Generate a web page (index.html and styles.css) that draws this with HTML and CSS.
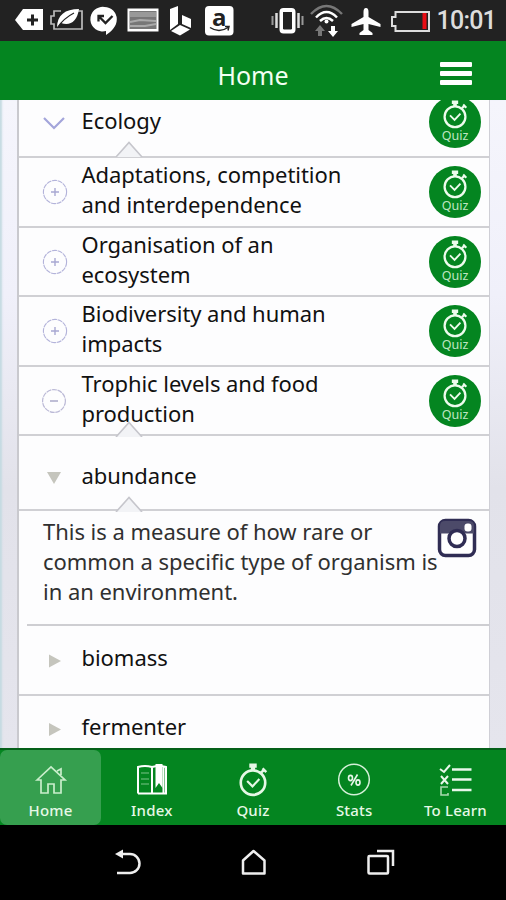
FILE: index.html
```html
<!DOCTYPE html>
<html lang="en">
<head>
<meta charset="utf-8">
<title>Home</title>
<link rel="stylesheet" href="styles.css">
</head>
<body>
<svg class="defs" aria-hidden="true">
  <symbol id="watch" viewBox="0 0 28 32">
    <g fill="none" stroke="currentColor" stroke-width="2.5">
      <circle cx="14" cy="18.500" r="11.500"/>
      <path d="M14 7V3M10.500 2.500h7" stroke-width="4"/>
      <path d="M21.500 9l3-2.500M23 5l3.500 3.500" stroke-width="2.400"/>
      <path d="M8.500 17l5 5 6.500-7" stroke-width="2"/>
    </g>
  </symbol>
  <symbol id="plus" viewBox="0 0 26 26">
    <circle cx="13" cy="13" r="11.600" fill="none" stroke="#b3b3da" stroke-width="1.1" stroke-dasharray="5 .7"/>
    <path d="M9 13h8M13 9v8" stroke="#a8a8d2" stroke-width="1.400"/>
  </symbol>
</svg>
<div class="status">
  <svg width="506" height="41" viewBox="0 0 506 41">
    <path d="M15 20l8-11h20v21H23z" fill="#fff"/>
    <path d="M27 20h11M32.500 14.500v11" stroke="#222" stroke-width="3"/>
    <path d="M61 11h-7v5h-3v8h3v5h28V11h-5" fill="none" stroke="#bbb" stroke-width="1.7"/>
    <path d="M57 28C57 15 65 9 79 9C77 22 70 26 61 23z" fill="#fff"/>
    <path d="M57 28Q64 18 74 13" fill="none" stroke="#222" stroke-width="1.2"/>
    <path d="M104.500 7a12.300 12.300 0 0 1 12.300 12.300c0 7-5 12-10.800 15.700v-4A12.300 12.300 0 1 1 104.500 7z" fill="#fff"/>
    <path d="M98.500 21.500V16h5.500M99 16.500l6.500 6.500 7-7" fill="none" stroke="#222" stroke-width="2.300"/>
    <rect x="127.500" y="8.500" width="31" height="23" fill="#fff"/>
    <rect x="129.500" y="11" width="27" height="18" fill="#777"/>
    <path d="M130 12h26v5h-26z" fill="#999"/>
    <path d="M130 22l10-2 16 1M130 26h15l11-2" stroke="#aaa" stroke-width="2" fill="none"/>
    <path d="M170 9l8-3v18l-8 6zM182 15l9 4v9l-9-4zM171 31l9-6 10 4.500-10 6z" fill="#fff"/>
    <rect x="205" y="6" width="28.500" height="29.500" rx="4" fill="#fff"/>
    <path d="M210 27.500q9 6 18 0M225 26.500h4l-1 4" fill="none" stroke="#222" stroke-width="1.500"/>
    <rect x="281.500" y="10" width="12" height="21.500" rx="2" fill="none" stroke="#fff" stroke-width="4"/>
    <rect x="283" y="12" width="9" height="17" fill="#222"/>
    <path d="M276.500 13v15M298.500 13v15" stroke="#ddd" stroke-width="2.500"/>
    <path d="M272.500 16v9M302.500 16v9" stroke="#999" stroke-width="2"/>
    <g fill="none" stroke-width="2.500">
      <path d="M311 14q15.500-16 31 0" stroke="#777"/>
      <path d="M316 17.500q10.500-11 21 0M320 21q6.500-6 13 0" stroke="#fff"/>
    </g>
    <path d="M315 31l5-6 5 6h-3v5h-4v-5z" fill="#777"/>
    <path d="M328 31l5 6 5-6h-3v-5h-4v5z" fill="#fff"/>
    <circle cx="326.500" cy="21.500" r="2" fill="#fff"/>
    <path d="M366 8c2 0 2.500 2 2.500 4v5l12 7v3l-12-3v6l4 3v2h-13v-2l4-3v-6l-12 3v-3l12-7v-5c0-2 .5-4 2.500-4z" fill="#fff"/>
    <path d="M395.500 12h33.500v19h-33.500v-5h-3.500v-9h3.500z" fill="#222" stroke="#ddd" stroke-width="2"/>
    <rect x="422.500" y="13" width="4" height="16" fill="#e80d14"/>
  </svg>
  <span class="amazon">a</span>
  <span class="clock">10:01</span>
</div>
<header class="top">
  <h1>Home</h1>
  <div class="burger"><i></i><i></i><i></i></div>
</header>
<main class="page">
  <div class="list">
    <div class="row first">
      <svg class="icon" viewBox="0 0 26 26"><path d="M2 9l10 10L22 9" fill="none" stroke="#a3a5da" stroke-width="2.200"/></svg>
      <p>Ecology</p>
      <div class="quiz"><svg><use href="#watch"/></svg><span>Quiz</span></div>
      <svg class="notch" viewBox="0 0 28 16"><path d="M1 16L14 1.500 27 16" fill="#f2f3f6" stroke="#c6c6cc" stroke-width="1.600"/></svg>
    </div>
    <div class="row">
      <svg class="icon"><use href="#plus"/></svg>
      <p>Adaptations, competition<br>and interdependence</p>
      <div class="quiz"><svg><use href="#watch"/></svg><span>Quiz</span></div>
    </div>
    <div class="row">
      <svg class="icon"><use href="#plus"/></svg>
      <p>Organisation of an<br>ecosystem</p>
      <div class="quiz"><svg><use href="#watch"/></svg><span>Quiz</span></div>
    </div>
    <div class="row">
      <svg class="icon"><use href="#plus"/></svg>
      <p>Biodiversity and human<br>impacts</p>
      <div class="quiz"><svg><use href="#watch"/></svg><span>Quiz</span></div>
    </div>
    <div class="row">
      <svg class="icon minus" viewBox="0 0 26 26"><circle cx="13" cy="13" r="11.400" fill="none" stroke="#bbb9d6" stroke-width="1.200" stroke-dasharray="5 .7"/><path d="M9 13h8" stroke="#aaa8c8" stroke-width="1.500"/></svg>
      <p>Trophic levels and food<br>production</p>
      <div class="quiz"><svg><use href="#watch"/></svg><span>Quiz</span></div>
      <svg class="notch low" viewBox="0 0 28 16"><path d="M1 16L14 1.500 27 16" fill="#f2f3f6" stroke="#c6c6cc" stroke-width="1.600"/></svg>
    </div>
    <div class="row term open">
      <svg class="icon" viewBox="0 0 26 26"><path d="M5 8h14l-7 12z" fill="#c5c5bd"/></svg>
      <p>abundance</p>
      <svg class="notch low" viewBox="0 0 28 16"><path d="M1 16L14 1.500 27 16" fill="#f2f3f6" stroke="#c6c6cc" stroke-width="1.600"/></svg>
    </div>
    <div class="detail">
      <p>This is a measure of how rare or<br>common a specific type of organism is<br>in an environment.</p>
      <svg class="insta" viewBox="0 0 40 40">
        <rect x="2.500" y="2.500" width="35" height="35" rx="6" fill="#fff" stroke="#302d54" stroke-width="3.500"/>
        <path d="M3 15.500V8q0-5 5-5h24q5 0 5 5v7.500z" fill="#4c4a69"/>
        <circle cx="20" cy="20.500" r="8" fill="#fff" stroke="#302d54" stroke-width="3.500"/>
        <rect x="27.500" y="5.500" width="7" height="8" rx="3" fill="#fff"/>
      </svg>
    </div>
    <div class="row term">
      <svg class="icon" viewBox="0 0 26 26"><path d="M7 6.500l12 6.500-12 6.500z" fill="#c5c5bd"/></svg>
      <p>biomass</p>
    </div>
    <div class="row term last">
      <svg class="icon" viewBox="0 0 26 26"><path d="M7 7l12 6.500-12 6.500z" fill="#c5c5bd"/></svg>
      <p>fermenter</p>
    </div>
  </div>
</main>
<nav class="tabs">
  <div class="tab on">
    <svg viewBox="0 0 34 34"><path d="M3 17L17 4l14 13h-4v13h-7v-9h-6v9H7V17zM23 8l4-2v6" fill="none" stroke="#c9eecb" stroke-width="1.700"/></svg>
    <span>Home</span>
  </div>
  <div class="tab">
    <svg viewBox="0 0 34 34"><g fill="none" stroke="#fff" stroke-width="2"><path d="M3 30.500V4q7-2 14 0 7-2 14 0v26.500H3M17 4v26M28.500 4v26"/><path d="M6 10h8M6 16h8M6 21h8" stroke="#7ac487" stroke-width="1.200"/></g><path d="M20.500 1h7v24l-3.500-5-3.500 5z" fill="#fff"/></svg>
    <span>Index</span>
  </div>
  <div class="tab">
    <svg><use href="#watch"/></svg>
    <span>Quiz</span>
  </div>
  <div class="tab">
    <svg viewBox="0 0 34 34"><circle cx="17" cy="16.500" r="15.300" fill="none" stroke="#d5f0d8" stroke-width="1.500"/><g fill="none" stroke="#e8f7ea" stroke-width="1.600"><ellipse cx="13.500" cy="15" rx="2" ry="2.600"/><ellipse cx="21" cy="19.500" rx="2" ry="2.600"/><path d="M20.500 11.500l-6.500 11"/></g></svg>
    <span>Stats</span>
  </div>
  <div class="tab">
    <svg viewBox="0 0 34 34"><g fill="none" stroke="#e8f7ea" stroke-width="2.500"><path d="M14 6.500h19.500M14 16.500h19.500M14 27h19.500"/><path d="M2 6l4 3 6-7M3 13l7 8M10 13l-7 8" stroke-width="2"/><path d="M10 24H3v8h7v-2" stroke="#a9d9af" stroke-width="1.600"/></g></svg>
    <span>To Learn</span>
  </div>
</nav>
<div class="system">
  <svg viewBox="0 0 506 75" width="506" height="75">
    <g fill="none" stroke="#eee" stroke-width="2.500">
      <path d="M121 29h9a9.500 9.500 0 0 1 0 19h-13"/>
      <path d="M243 48.500V35.500l10.500-9.500L264.500 35.500v13z" stroke-linejoin="round"/>
      <rect x="368.500" y="31" width="19.500" height="17.500" rx="1"/>
      <path d="M377 26h16v15"/>
    </g>
    <path d="M115 29l8-4.500v9z" fill="#eee"/>
  </svg>
</div>
</body>
</html>
```
FILE: styles.css
```css
* { box-sizing: border-box; }
body {
  margin: 0;
  width: 506px;
  height: 900px;
  overflow: hidden;
  display: flex;
  flex-direction: column;
  font-family: "Noto Sans", "Open Sans", sans-serif;
  color: #111;
}
p, h1 { margin: 0; font-weight: 400; }
svg { display: block; }
.defs { position: absolute; width: 0; height: 0; }

.status { position: relative; height: 41px; flex: none; background: #222; color: #fff; }
.clock {
  position: absolute; right: 10px; top: 5px;
  font: 500 25px/32px Roboto, sans-serif; letter-spacing: -0.8px; color: #ddd;
}
.amazon {
  position: absolute; left: 212px; top: 2px;
  font: bold 24px/30px "Open Sans", sans-serif; color: #222;
}

.top {
  height: 59px; flex: none; background: #048520; color: #f2fff2;
  display: grid; grid-template-columns: 1fr auto 1fr; align-items: center;
}
.top h1 { grid-column: 2; font-size: 25px; line-height: 34px; padding-top: 8px; }
.burger {
  justify-self: end; margin: 6px 34px 0 0; width: 32px;
  display: flex; flex-direction: column; gap: 4px;
}
.burger i { height: 5px; background: #fff; border-radius: 1px; }

.page {
  height: 648px; flex: none; overflow: hidden; padding: 0 16px 0 17px;
  background: linear-gradient(180deg, #f5f5fc, #f0f0fa 30%, #e2e2ea 60%, #e5e5ed);
  box-shadow: inset 3px 0 2px -1px #c5dbe2;
}
.list { background: #fdfdfe; border-left: 2px solid #c9c9ce; border-right: 1px solid #cfcfd6; }
.row {
  position: relative; height: 69.5px; border-bottom: 2px solid #d0d0d4;
  display: flex; align-items: center; padding: 1px 8px 0 23px;
}
.row p {
  flex: 1; margin-left: 13.500px; padding-bottom: 6px;
  font-size: 22px; line-height: 30px; letter-spacing: -0.05px;
}
.row.first { height: 58.2px; padding-bottom: 13px; }
.row.first p { padding-bottom: 5px; }
.icon { width: 26px; height: 26px; flex: none; }
.icon.minus { margin: 0 1px 0 -1px; }
.row.term { height: 70px; }
.row.term p { padding-bottom: 7px; }
.row.open { height: 75px; padding-top: 8px; }
.row.open p { padding-bottom: 4px; }
.row.last { height: 69px; border: 0; padding-bottom: 4px; }
.notch { position: absolute; left: 96px; bottom: -1px; width: 28px; height: 16px; }
.notch.low { bottom: -3px; }
.quiz {
  width: 52px; height: 52px; border-radius: 50%; background: #048520; color: #edfced;
  display: flex; flex-direction: column; align-items: center; padding-top: 4px;
}
.quiz svg { width: 26px; height: 29px; }
.quiz span { font-size: 12.5px; line-height: 15px; margin-top: -1px; color: #bfe6c2; }
.detail {
  height: 115px; margin-left: 8px; padding: 5px 13px 0 16px;
  border-bottom: 2px solid #ceced2; display: flex; justify-content: space-between;
}
.detail p {
  font-size: 22px; line-height: 30px; letter-spacing: -0.03px;
  white-space: nowrap; color: #303030; width: 394px;
}
.insta { width: 40px; height: 40px; flex: none; margin-top: 2px; }

.tabs {
  height: 77px; flex: none; background: #048520; color: #e6f8e6; border-top: 2px solid #056019;
  display: grid; grid-template-columns: repeat(5, 1fr);
}
.tab { display: flex; flex-direction: column; align-items: center; padding-top: 13px; }
.tab svg { width: 34px; height: 34px; }
.tab span {
  font-size: 15px; font-weight: 500; line-height: 20px; letter-spacing: 0.2px;
  margin-top: 3px; white-space: nowrap;
}
.tab.on { background: #369f4f; border-radius: 7px; }

.system { height: 75px; flex: none; background: #000; }
```
